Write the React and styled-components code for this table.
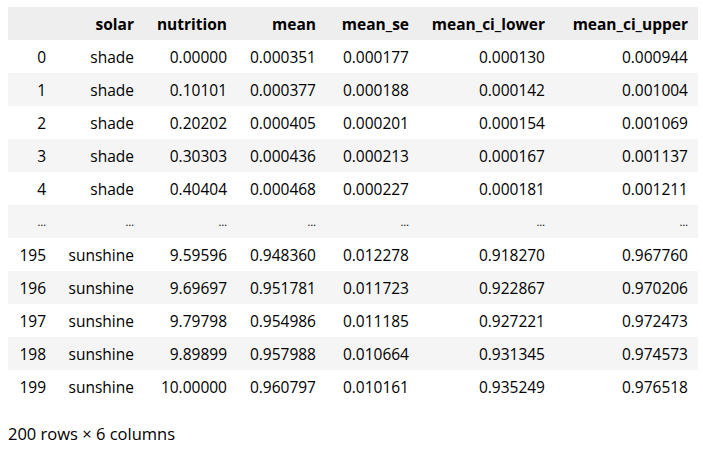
import React from "react";
import styled, { createGlobalStyle } from "styled-components";

const GlobalStyle = createGlobalStyle`
  body {
    margin: 0;
    background: #ffffff;
    font-family: "Open Sans", "Noto Sans", sans-serif;
    color: #000000;
  }
`;

const columns = [
  { key: "idx", label: "", width: 48 },
  { key: "solar", label: "solar", width: 88 },
  { key: "nutrition", label: "nutrition", width: 93 },
  { key: "mean", label: "mean", width: 89 },
  { key: "mean_se", label: "mean_se", width: 93 },
  { key: "lower", label: "mean_ci_lower", width: 136 },
  { key: "upper", label: "mean_ci_upper", width: 143 },
];

const rows = [
  ["0", "shade", "0.00000", "0.000351", "0.000177", "0.000130", "0.000944"],
  ["1", "shade", "0.10101", "0.000377", "0.000188", "0.000142", "0.001004"],
  ["2", "shade", "0.20202", "0.000405", "0.000201", "0.000154", "0.001069"],
  ["3", "shade", "0.30303", "0.000436", "0.000213", "0.000167", "0.001137"],
  ["4", "shade", "0.40404", "0.000468", "0.000227", "0.000181", "0.001211"],
  ["...", "...", "...", "...", "...", "...", "..."],
  ["195", "sunshine", "9.59596", "0.948360", "0.012278", "0.918270", "0.967760"],
  ["196", "sunshine", "9.69697", "0.951781", "0.011723", "0.922867", "0.970206"],
  ["197", "sunshine", "9.79798", "0.954986", "0.011185", "0.927221", "0.972473"],
  ["198", "sunshine", "9.89899", "0.957988", "0.010664", "0.931345", "0.974573"],
  ["199", "sunshine", "10.00000", "0.960797", "0.010161", "0.935249", "0.976518"],
];

const Output = styled.div`
  padding: 7px 5px 0 8px;
`;

const Table = styled.table`
  border-collapse: collapse;
  border-spacing: 0;
  table-layout: fixed;
  width: 690px;
  font-size: 15.5px;
`;

const HeadRow = styled.tr`
  background: #eeeeee;
`;

const Row = styled.tr`
  background: ${(p) => (p.$striped ? "#f5f5f5" : "#ffffff")};
`;

const Th = styled.th`
  height: 33px;
  padding: 0 10px;
  text-align: right;
  font-weight: 700;
  white-space: nowrap;
`;

const Td = styled.td`
  height: 33px;
  padding: 0 10px;
  text-align: right;
  white-space: nowrap;
  font-weight: 400;
  font-size: ${(p) => (p.$ellipsis ? "11px" : "inherit")};
`;

const Footer = styled.p`
  margin: 19px 0 0;
  font-size: 16.5px;
`;

export default function App() {
  return (
    <Output>
      <GlobalStyle />
      <Table>
        <colgroup>
          {columns.map((c) => (
            <col key={c.key} style={{ width: c.width }} />
          ))}
        </colgroup>
        <thead>
          <HeadRow>
            {columns.map((c) => (
              <Th key={c.key}>{c.label}</Th>
            ))}
          </HeadRow>
        </thead>
        <tbody>
          {rows.map((r, i) => (
            <Row key={i} $striped={i % 2 === 1}>
              {r.map((v, j) => (
                <Td key={j} $ellipsis={v === "..."}>
                  {v === "..." ? "…" : v}
                </Td>
              ))}
            </Row>
          ))}
        </tbody>
      </Table>
      <Footer>200 rows × 6 columns</Footer>
    </Output>
  );
}
